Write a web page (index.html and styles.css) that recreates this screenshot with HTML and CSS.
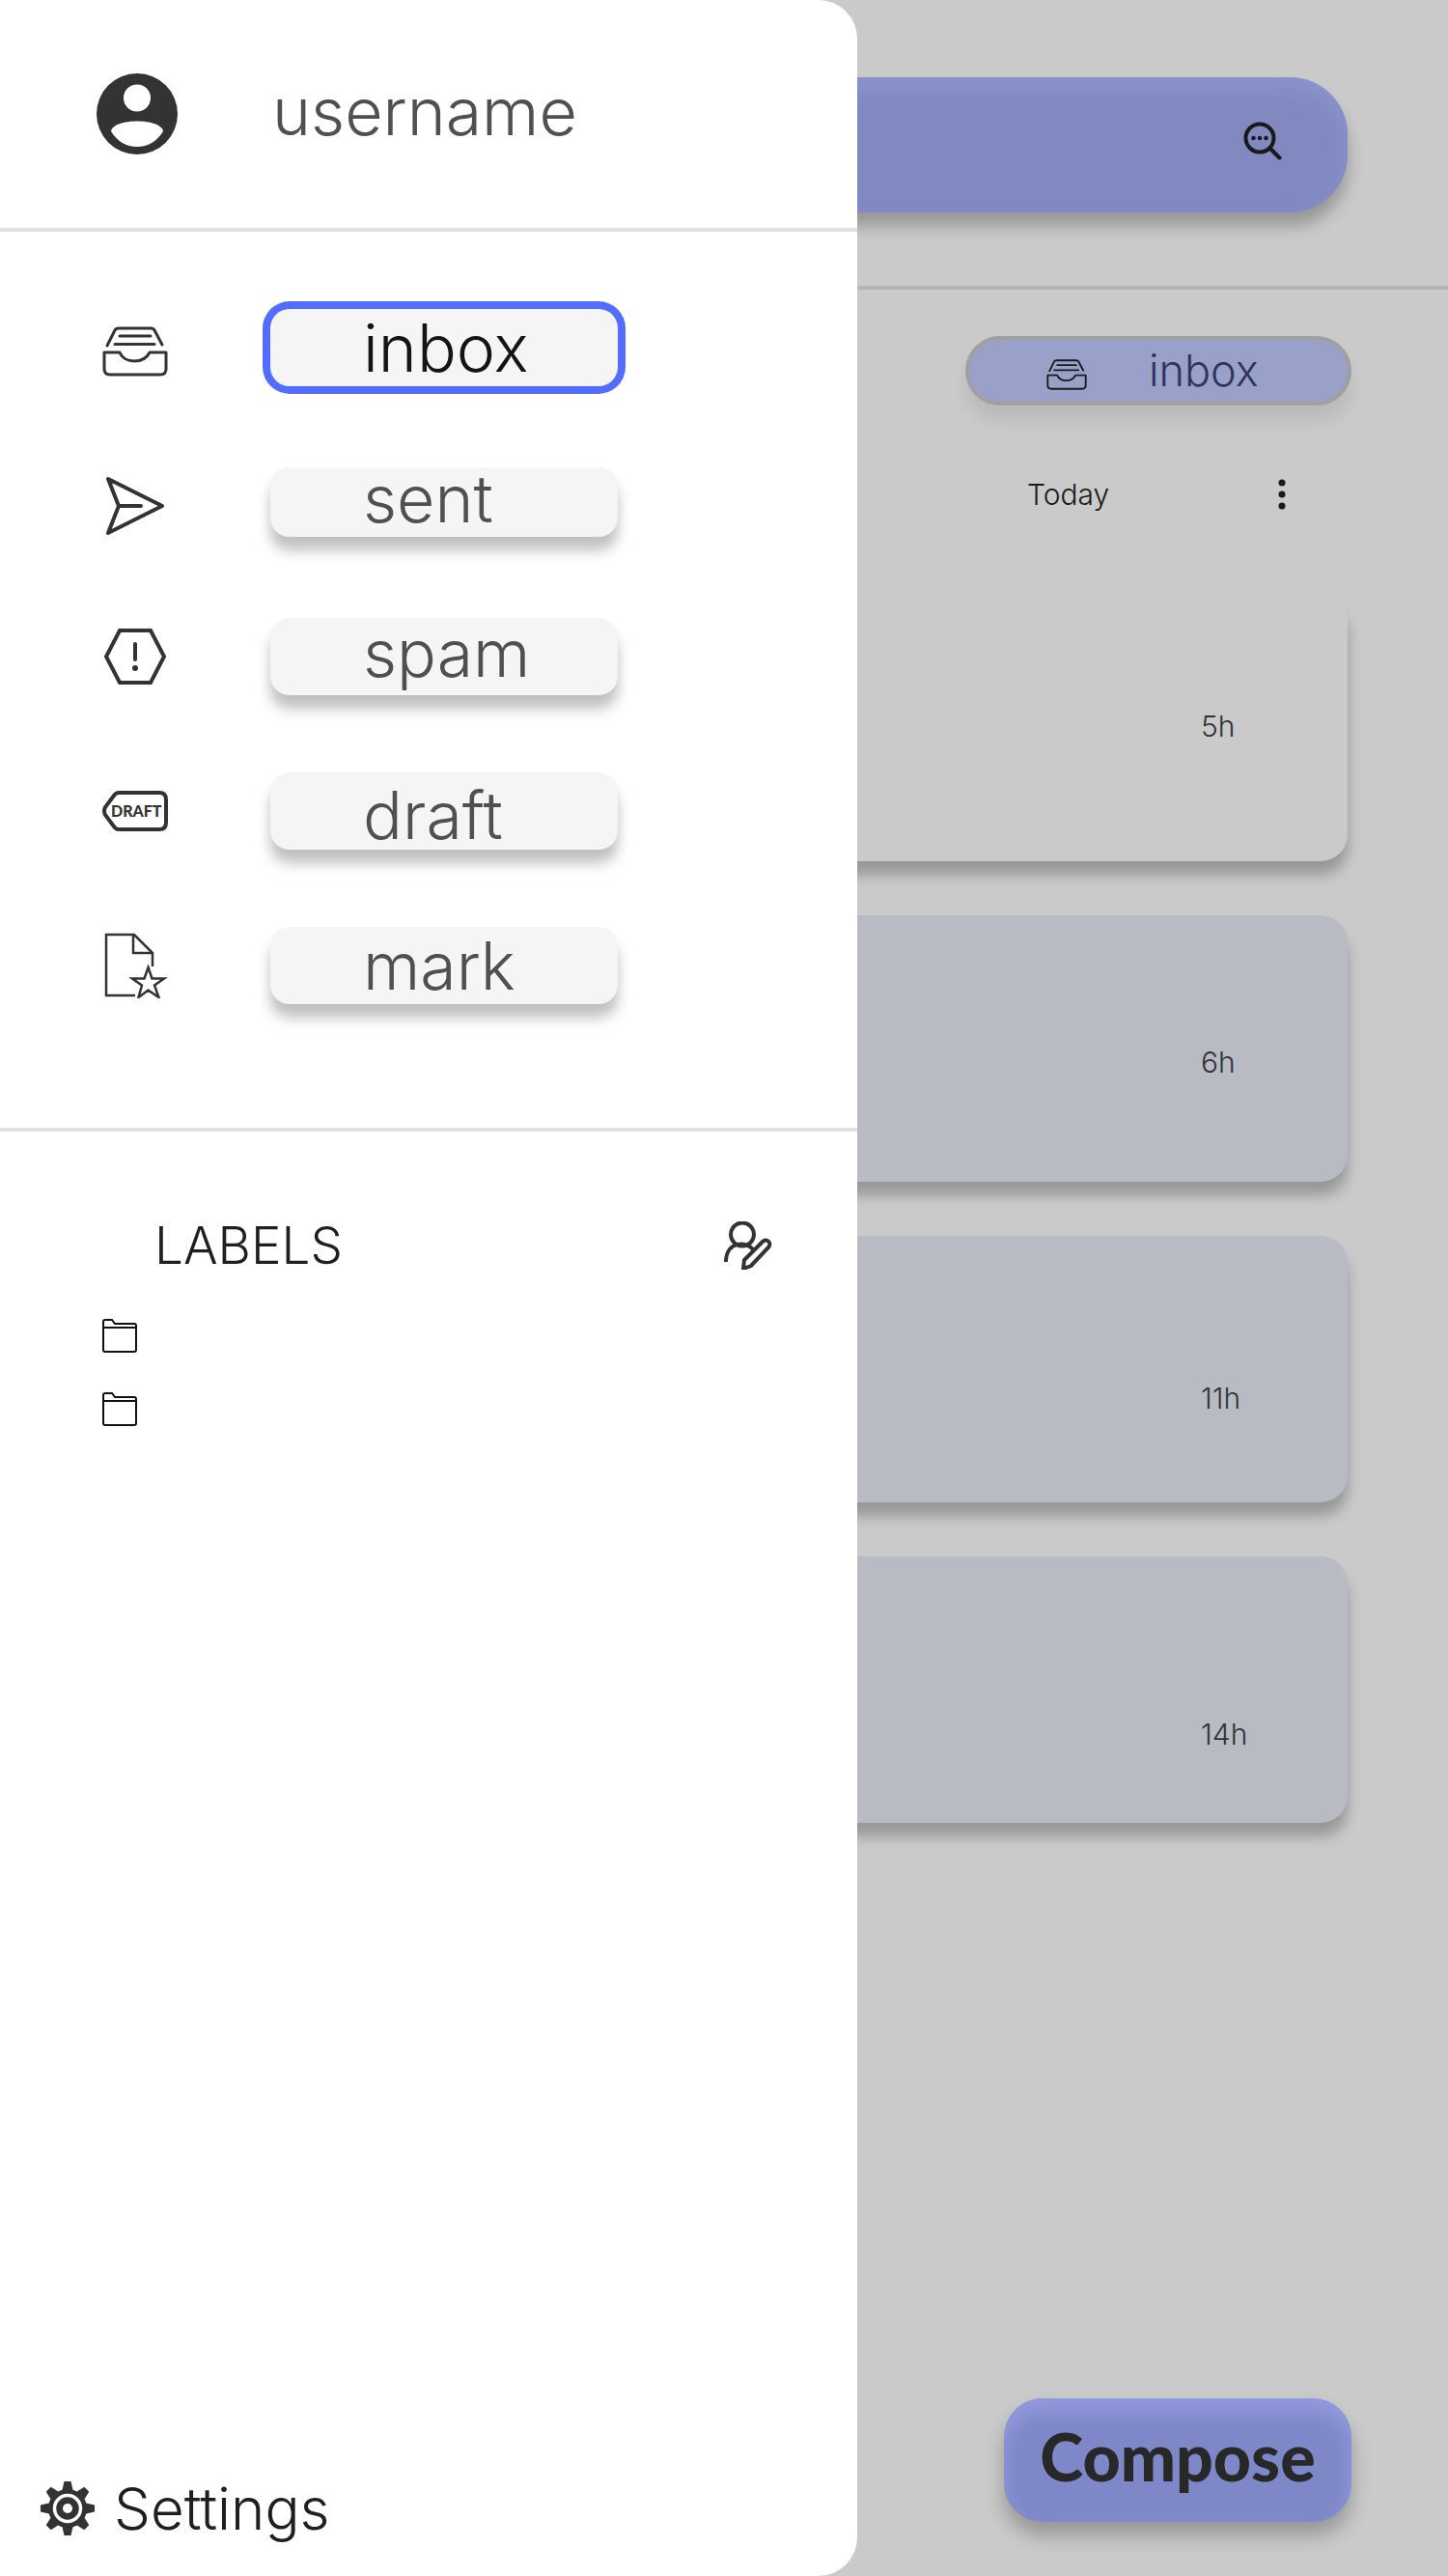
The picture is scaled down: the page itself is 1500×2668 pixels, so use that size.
FILE: index.html
```html
<!DOCTYPE html>
<html lang="en">
<head>
<meta charset="utf-8">
<meta name="viewport" content="width=device-width, initial-scale=1">
<title>Mail</title>
<link rel="stylesheet" href="styles.css">
</head>
<body>
<svg class="sprite" aria-hidden="true">
  <symbol id="tray" viewBox="0 0 68 52">
    <g fill="none" stroke="currentColor" stroke-width="3" stroke-linecap="round" stroke-linejoin="round">
      <path d="M5 20 13 4Q14 2 17 2H50Q53 2 54 4L62 19M18 10H50M13 18.500H54"/>
      <path d="M2 27H18C23 39 43 39 49 27H66V44Q66 50 60 50H8Q2 50 2 44Z"/>
    </g>
  </symbol>
</svg>

<main class="mailbox">
  <header class="topbar">
    <div class="search">
      <button class="icon-button" type="button" aria-label="Search">
        <svg width="40" height="40" viewBox="0 0 40 40" fill="none" stroke="currentColor" stroke-width="4" stroke-linecap="round"><circle cx="17" cy="17" r="14.500"/><path d="M28 28 37.500 37.500"/><g fill="currentColor" stroke="none"><circle cx="10.500" cy="17" r="2.300"/><circle cx="17" cy="17" r="2.300"/><circle cx="23.500" cy="17" r="2.300"/></g></svg>
      </button>
    </div>
  </header>
  <div class="content">
    <button class="pill" type="button"><svg width="42" height="32"><use href="#tray"/></svg>inbox</button>
    <div class="day">
      <h2 class="day-title">Today</h2>
      <button class="icon-button" type="button" aria-label="More">
        <svg width="8" height="32" viewBox="0 0 8 32" fill="currentColor"><circle cx="4" cy="4" r="3.500"/><circle cx="4" cy="16" r="3.500"/><circle cx="4" cy="28" r="3.500"/></svg>
      </button>
    </div>
    <ul class="messages">
      <li class="message message-open"><time>5h</time></li>
      <li class="message"><time>6h</time></li>
      <li class="message"><time>11h</time></li>
      <li class="message"><time>14h</time></li>
    </ul>
    <button class="compose" type="button">Compose</button>
  </div>
</main>

<aside class="drawer">
  <header class="profile">
    <svg width="84" height="84" viewBox="0 0 84 84"><circle cx="42" cy="42" r="42" fill="#333"/><circle cx="42" cy="25.500" r="14" fill="#fff"/><path d="M15 60C17 46 67 46 69 60Q59 76 42 76T15 60Z" fill="#fff"/></svg>
    <span class="username">username</span>
  </header>
  <nav class="folders">
    <div class="folder">
      <svg width="68" height="60" viewBox="0 -8 68 60"><use href="#tray" width="68" height="52"/></svg>
      <button class="folder-button is-active" type="button">inbox</button>
    </div>
    <div class="folder">
      <svg width="68" height="70" viewBox="0 -8 68 70" fill="none" stroke="currentColor" stroke-width="4" stroke-linejoin="round" stroke-linecap="round"><path d="M6 3 62 31 6 59 17 31ZM17 31H40"/></svg>
      <button class="folder-button text-raised" type="button">sent</button>
    </div>
    <div class="folder">
      <svg width="68" height="60" viewBox="0 0 68 60" fill="none" stroke="currentColor" stroke-width="4" stroke-linecap="round"><path d="M18 3H50L64 30 50 57H18L4 30ZM34 17V33"/><circle cx="34" cy="42" r="3" fill="currentColor" stroke="none"/></svg>
      <button class="folder-button text-high" type="button">spam</button>
    </div>
    <div class="folder">
      <svg width="68" height="42" viewBox="0 0 68 42"><path d="M17 2H59Q66 2 66 9V33Q66 40 59 40H17Q14 40 12 37L3 25Q1 21 3 17L12 5Q14 2 17 2Z" fill="none" stroke="currentColor" stroke-width="4"/><text class="tag-text" x="9" y="27">DRAFT</text></svg>
      <button class="folder-button text-low" type="button">draft</button>
    </div>
    <div class="folder">
      <svg width="68" height="68" viewBox="0 0 68 68" fill="none" stroke="currentColor" stroke-width="2.500"><path d="M34 65H4V2H33L52 21V35M32 2V21H52"/><path d="M47.500 36 51.500 47.500H64L54 54.500 58.500 67 47.500 59.500 37.500 67 41 54.500 31 47.500H43.500Z"/></svg>
      <button class="folder-button" type="button">mark</button>
    </div>
  </nav>
  <section class="labels">
    <div class="labels-head">
      <h2 class="labels-title">LABELS</h2>
      <button class="icon-button" type="button" aria-label="Edit labels">
        <svg width="50" height="50" viewBox="0 0 50 50" fill="none" stroke="currentColor" stroke-width="4"><circle cx="19" cy="13.500" r="12"/><path d="M2 42C2 20 24 20 31 30M20 49 21 40 40 21C44 17 50 22 46 27L28 46Z"/></svg>
      </button>
    </div>
    <ul class="label-list">
      <li><svg width="36" height="36" viewBox="0 0 36 36" fill="none" stroke="currentColor" stroke-width="2"><path d="M1 3Q1 1 3 1H10L13 5H33Q35 5 35 7V32Q35 34 33 34H3Q1 34 1 32ZM1 9H35"/></svg></li>
      <li><svg width="36" height="36" viewBox="0 0 36 36" fill="none" stroke="currentColor" stroke-width="2"><path d="M1 3Q1 1 3 1H10L13 5H33Q35 5 35 7V32Q35 34 33 34H3Q1 34 1 32ZM1 9H35"/></svg></li>
    </ul>
  </section>
  <a class="settings" href="#settings">
    <svg width="56" height="56" viewBox="-28 -28 56 56"><defs><path id="tooth" d="M-6-17-3.500-28H3.500L6-17Z"/></defs><g fill="#333"><circle r="20"/><use href="#tooth"/><use href="#tooth" transform="rotate(45)"/><use href="#tooth" transform="rotate(90)"/><use href="#tooth" transform="rotate(135)"/><use href="#tooth" transform="rotate(180)"/><use href="#tooth" transform="rotate(225)"/><use href="#tooth" transform="rotate(270)"/><use href="#tooth" transform="rotate(315)"/></g><circle r="13.500" fill="none" stroke="#fff" stroke-width="3.500"/><circle r="5" fill="#fff"/></svg>
    Settings
  </a>
</aside>
</body>
</html>
```
FILE: styles.css
```css
* { box-sizing: border-box; }

body {
  margin: 0;
  min-height: 100vh;
  position: relative;
  background: #cacaca;
  color: #1a1a1a;
  font-family: Inter, "Open Sans", sans-serif;
  font-weight: 350;
}

button {
  border: 0;
  background: none;
  color: inherit;
  font: inherit;
  cursor: pointer;
}

ul { margin: 0; padding: 0; list-style: none; }
h2 { margin: 0; font-weight: 350; }
svg { display: block; flex: none; }
.sprite { position: absolute; width: 0; height: 0; }
.icon-button { padding: 0; }

/* Mailbox behind the drawer */
.mailbox {
  min-height: 100vh;
  display: flex;
  flex-direction: column;
}

.topbar {
  padding: 80px 104px 76px;
  border-bottom: 4px solid #b5b5b5;
}

.search {
  display: flex;
  align-items: center;
  justify-content: flex-end;
  height: 140px;
  padding: 0 68px 8px;
  border-radius: 60px;
  background: #8189c0;
  box-shadow: 0 14px 16px rgba(0, 0, 0, .25), inset 0 12px 24px #8c94cd;
}

.content {
  flex: 1;
  display: flex;
  flex-direction: column;
  align-items: flex-end;
  padding: 48px 100px 56px;
}

.pill {
  display: flex;
  align-items: center;
  gap: 64px;
  width: 400px;
  height: 72px;
  padding: 0 80px;
  border: 4px solid #a0a0a0;
  border-radius: 36px;
  background: #9aa1c8;
  box-shadow: 0 16px 16px rgba(0, 0, 0, .08);
  color: #2f3560;
  font-size: 45px;
  line-height: 64px;
}

.pill svg { color: #1a1a1a; margin-top: 8px; }

.day {
  display: flex;
  align-items: center;
  justify-content: space-between;
  width: 336px;
  height: 64px;
  margin: 60px 0;
  padding-right: 68px;
}

.day-title { font-size: 30px; line-height: 40px; }

.messages {
  align-self: stretch;
  display: grid;
  gap: 56px;
  margin: 12px 4px 0;
}

.message {
  display: flex;
  justify-content: flex-end;
  height: 276px;
  padding-right: 68px;
  border-radius: 28px;
  background: #b8bbc4;
  box-shadow: 0 14px 14px rgba(0, 0, 0, .25);
  color: #333;
  font-size: 30px;
  line-height: 40px;
}

.message-open { background: #cacaca; }
.message time { width: 84px; }
.message:nth-child(1) { padding-top: 116px; }
.message:nth-child(2) { padding-top: 132px; }
.message:nth-child(3) { padding-top: 148px; }
.message:nth-child(4) { padding-top: 164px; }

.compose {
  width: 360px;
  height: 128px;
  margin-top: auto;
  padding: 0 0 8px;
  border-radius: 40px;
  background: #7e88c9;
  box-shadow: 0 14px 20px rgba(0, 0, 0, .25), inset 0 12px 20px #929cdf;
  color: #282828;
  font-family: Lato, "Open Sans", sans-serif;
  font-size: 68px;
  font-weight: 900;
  line-height: 120px;
}

/* Drawer */
.drawer {
  position: absolute;
  inset: 0 auto 0 0;
  width: min(888px, 100%);
  display: flex;
  flex-direction: column;
  border-radius: 0 40px 40px 0;
  background: #fff;
  color: #333;
}

.profile {
  display: flex;
  align-items: center;
  gap: 98px;
  height: 240px;
  padding: 0 100px;
  border-bottom: 4px solid #e0e0e0;
  color: #505050;
  font-size: 68px;
}

.username { padding-bottom: 6px; }

.folders {
  display: grid;
  gap: 80px;
  padding: 80px 106px 128px;
  border-bottom: 4px solid #e0e0e0;
}

.folder {
  display: flex;
  align-items: center;
  gap: 106px;
  height: 80px;
}

.folder-button {
  width: 360px;
  height: 80px;
  padding: 0 0 0 96px;
  border-radius: 20px;
  background: #f5f5f5;
  box-shadow: 0 14px 14px rgba(0, 0, 0, .25);
  color: #505050;
  font-size: 68px;
  line-height: 80px;
  text-align: left;
}

.folder-button.is-active {
  box-shadow: 0 0 0 8px #526dff;
  color: #141414;
}

.text-raised { height: 72px; padding-bottom: 8px; line-height: 64px; }
.text-high { padding-bottom: 8px; line-height: 72px; }
.text-low { padding-top: 8px; line-height: 72px; }

.tag-text { font-family: Lato, sans-serif; font-size: 16px; font-weight: 900; fill: currentColor; }

.labels { padding: 84px 88px 0 106px; }

.labels-head {
  display: flex;
  align-items: center;
  justify-content: space-between;
  height: 68px;
  padding-left: 54px;
}

.labels-title { color: #1f1f1f; font-size: 53px; line-height: 68px; }

.label-list { display: grid; gap: 40px; padding-top: 42px; color: #111; }

.settings {
  display: flex;
  align-items: center;
  gap: 20px;
  margin-top: auto;
  padding: 0 42px 34px;
  color: #1f1f1f;
  font-size: 60px;
  line-height: 72px;
  text-decoration: none;
}
```
